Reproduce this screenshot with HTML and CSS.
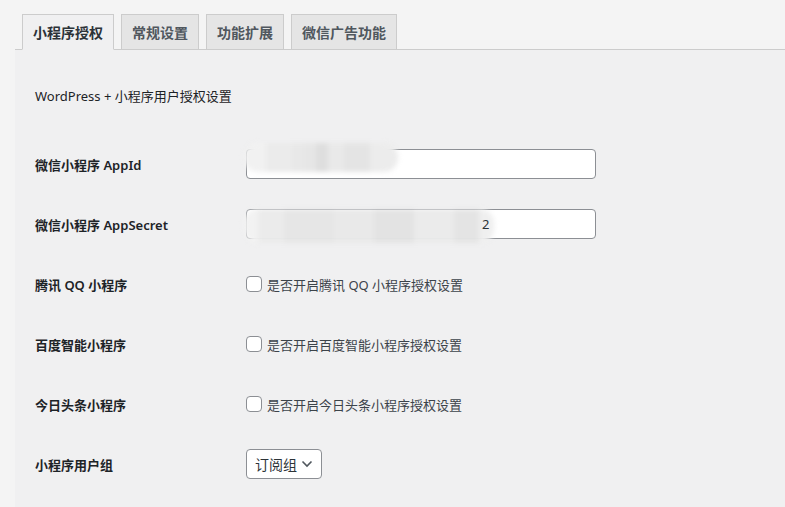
FILE: index.html
```html
<!DOCTYPE html>
<html lang="zh-CN">
<head>
  <meta charset="UTF-8" />
  <title>小程序设置</title>
  <link rel="stylesheet" href="styles.css">
</head>
<body>
  <div class="wrap">
    <!-- Tabs -->
    <nav class="tabs">
      <a class="tab active">小程序授权</a>
      <a class="tab">常规设置</a>
      <a class="tab">功能扩展</a>
      <a class="tab">微信广告功能</a>
    </nav>

    <div class="panel">
      <h3 class="panel-title">WordPress + 小程序用户授权设置</h3>

      <div class="form-table">
        <div class="row">
          <label class="row-label">微信小程序 AppId</label>
          <div class="field">
            <input type="text" class="text-input" value="">
            <span class="mask mask-short"></span>
          </div>
        </div>

        <div class="row">
          <label class="row-label">微信小程序 AppSecret</label>
          <div class="field">
            <input type="text" class="text-input" value="">
            <span class="mask mask-long"></span>
            <span class="tail">2</span>
          </div>
        </div>

        <div class="row">
          <label class="row-label">腾讯 QQ 小程序</label>
          <label class="check"><span class="box"></span>是否开启腾讯 QQ 小程序授权设置</label>
        </div>

        <div class="row">
          <label class="row-label">百度智能小程序</label>
          <label class="check"><span class="box"></span>是否开启百度智能小程序授权设置</label>
        </div>

        <div class="row">
          <label class="row-label">今日头条小程序</label>
          <label class="check"><span class="box"></span>是否开启今日头条小程序授权设置</label>
        </div>

        <div class="row">
          <label class="row-label">小程序用户组</label>
          <div class="select">
            <span class="select-value">订阅组</span>
            <svg width="12" height="8" viewBox="0 0 12 8"><path d="M1.5 1.5 6 6l4.5-4.5" fill="none" stroke="#50575e" stroke-width="1.6"/></svg>
          </div>
        </div>
      </div>
    </div>
  </div>
</body>
</html>
```

FILE: styles.css
```css
* {
  box-sizing: border-box;
}

html, body {
  height: 100%;
}

body {
  margin: 0;
  background: #f4f4f4;
  font-family: "Segoe UI", "Noto Sans", "Noto Sans CJK SC", sans-serif;
  font-size: 13px;
  color: #3c434a;
}

.wrap {
  margin-left: 15px;
  height: 100%;
  display: flex;
  flex-direction: column;
}

.tabs {
  display: flex;
  gap: 7px;
  padding: 14px 0 0 7px;
  border-bottom: 1px solid #cccccc;
}

.tab {
  display: block;
  padding: 5px 10px;
  margin-bottom: -1px;
  line-height: 24px;
  font-family: "Noto Sans CJK SC", sans-serif;
  font-size: 14px;
  font-weight: 600;
  color: #50575e;
  background: #e5e5e5;
  border: 1px solid #cccccc;
}

.tab.active {
  background: #f0f0f1;
  color: #2c3338;
  border-bottom-color: #f0f0f1;
}

.panel {
  flex: 1;
  background: #f0f0f1;
  padding: 36px 20px 0;
}

.panel-title {
  margin: 0 0 28px;
  font-size: 13px;
  font-weight: 400;
  line-height: 20px;
  color: #1d2327;
}

.row {
  display: grid;
  grid-template-columns: 211px 1fr;
  align-items: center;
  height: 60px;
}

.row-label {
  font-weight: 600;
  color: #1d2327;
}

.field {
  position: relative;
  width: 350px;
}

.text-input {
  display: block;
  width: 350px;
  height: 30px;
  border: 1px solid #8c8f94;
  border-radius: 4px;
  background: #fff;
}

/* blurred value mosaic */
.mask {
  position: absolute;
  left: -2px;
  border-radius: 14px;
  filter: blur(2.5px);
}

.mask-short {
  top: -6px;
  width: 154px;
  height: 29px;
  background:
    linear-gradient(90deg, #f1f1f1 0 22px, #ebebeb 22px 48px, #e8e8e8 48px 60px, #e6e6e6 60px 72px, #dedede 72px 84px, #e9e9e9 84px 100px, #e4e4e4 100px 126px, #ececec 126px);
}

.mask-long {
  top: 0;
  width: 250px;
  height: 34px;
  background:
    linear-gradient(90deg, #f2f2f2 0 14px, #ebebeb 14px 40px, #e6e6e6 40px 90px, #e9e9e9 90px 130px, #e3e3e3 130px 170px, #ebebeb 170px 210px, #e4e4e4 210px 235px, #efefef 235px);
}

.tail {
  position: absolute;
  left: 236px;
  top: 6px;
  color: #2c3338;
  font-size: 13px;
}

.check {
  display: flex;
  align-items: center;
  gap: 5px;
  color: #3c434a;
}

.box {
  width: 16px;
  height: 16px;
  border: 1px solid #8c8f94;
  border-radius: 4px;
  background: #fff;
}

.select {
  display: flex;
  align-items: center;
  justify-content: space-between;
  width: 76px;
  height: 30px;
  padding: 0 8px 0 8px;
  border: 1px solid #8c8f94;
  border-radius: 4px;
  background: #fff;
  color: #2c3338;
  font-size: 14px;
  white-space: nowrap;
}
```
